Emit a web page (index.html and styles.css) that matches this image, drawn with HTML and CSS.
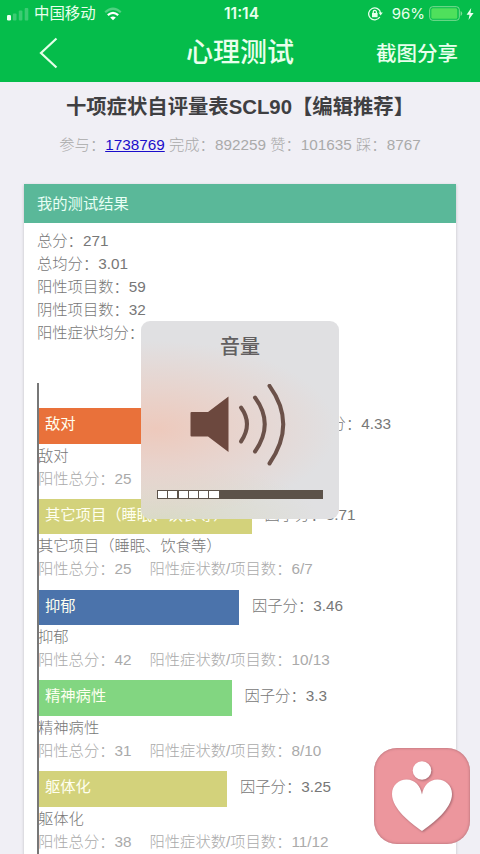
FILE: index.html
```html
<!DOCTYPE html>
<html lang="zh-CN">
<head>
<meta charset="utf-8">
<title>心理测试</title>
<link rel="stylesheet" href="styles.css">
</head>
<body>
<header class="top">
  <div class="status">
    <div class="status-left">
      <svg class="signal" width="22" height="14" viewBox="0 0 22 14"><rect x="0" y="8" width="4" height="5.500" rx="1.200" fill="#effff2"/><g fill="#fff" opacity=".22"><rect x="5.900" y="6.500" width="3.600" height="7" rx="1"/><rect x="11.800" y="3.500" width="3.600" height="10" rx="1"/><rect x="17.700" y="1" width="3.600" height="12.500" rx="1"/></g></svg>
      <span class="carrier">中国移动</span>
      <svg class="wifi" width="18" height="14" viewBox="0 0 18 14" fill="none" stroke="#fff" stroke-width="2.200"><path d="M1.200 5.300Q9-1.800 16.800 5.300" opacity=".3"/><path d="M3.800 8.100Q9 3.500 14.200 8.100"/><path d="M6.200 10.600Q9 8.200 11.800 10.600L9 13.300Z" fill="#fff" stroke="none"/></svg>
    </div>
    <div class="clock">11:14</div>
    <div class="status-right">
      <svg class="lock" width="15" height="14" viewBox="0 0 15 14" fill="none" stroke="#e8ffec" stroke-width="1.300"><path d="M11.800 10A6 6 0 1 1 12.600 6"/><path d="M10.500 5.600h4.300l-2.200 2.800z" fill="#e8ffec" stroke="none"/><rect x="4" y="6" width="5.600" height="4.200" fill="#e8ffec" stroke="none"/><path d="M5.200 6.300V5a1.600 1.600 0 0 1 3.200 0v1.300"/></svg>
      <span class="percent">96%</span>
      <svg class="battery" width="34" height="15" viewBox="0 0 34 15"><rect x=".7" y=".7" width="29.600" height="13.600" rx="3" fill="none" stroke="#7fdc94"/><rect x="2.300" y="2.300" width="26" height="10.400" rx="1.500" fill="#4fe05c"/><path d="M31.600 5v5q1.600-.8 1.600-2.500T31.600 5" fill="#7fdc94"/></svg>
      <svg class="bolt" width="8" height="12" viewBox="0 0 8 12"><path d="M5.200 0L.6 6.700H3.500L2.500 12 7.600 4.900H4.500Z" fill="#effff2"/></svg>
    </div>
  </div>
  <nav class="nav">
    <svg class="back" width="20" height="32" viewBox="0 0 20 32"><path d="M17.500 1.500L2 16 17.500 30.500" fill="none" stroke="#e4ffe9" stroke-width="2.200"/></svg>
    <h1 class="nav-title">心理测试</h1>
    <span class="share">截图分享</span>
  </nav>
</header>

<main class="page">
  <h2 class="quiz-title">十项症状自评量表SCL90【编辑推荐】</h2>
  <p class="meta">参与：<a class="count" href="#">1738769</a> 完成：892259 赞：101635 踩：8767</p>

  <section class="card">
    <div class="card-head">我的测试结果</div>
    <div class="summary">
      <p>总分：271</p>
      <p>总均分：3.01</p>
      <p>阳性项目数：59</p>
      <p>阴性项目数：32</p>
      <p>阳性症状均分：</p>
    </div>
    <div class="chart">
      <div class="factor">
        <div class="bar-row"><div class="bar orange" style="width:248px">敌对</div><span class="score">因子分：4.33</span></div>
        <p class="name">敌对</p>
        <p class="detail">阳性总分：25</p>
      </div>
      <div class="factor">
        <div class="bar-row"><div class="bar olive" style="width:212.500px">其它项目（睡眠、饮食等）</div><span class="score">因子分：3.71</span></div>
        <p class="name">其它项目（睡眠、饮食等）</p>
        <p class="detail"><span>阳性总分：25</span><span>阳性症状数/项目数：6/7</span></p>
      </div>
      <div class="factor">
        <div class="bar-row"><div class="bar blue" style="width:200px">抑郁</div><span class="score">因子分：3.46</span></div>
        <p class="name">抑郁</p>
        <p class="detail"><span>阳性总分：42</span><span>阳性症状数/项目数：10/13</span></p>
      </div>
      <div class="factor">
        <div class="bar-row"><div class="bar green" style="width:192.500px">精神病性</div><span class="score">因子分：3.3</span></div>
        <p class="name">精神病性</p>
        <p class="detail"><span>阳性总分：31</span><span>阳性症状数/项目数：8/10</span></p>
      </div>
      <div class="factor">
        <div class="bar-row"><div class="bar olive" style="width:188px">躯体化</div><span class="score">因子分：3.25</span></div>
        <p class="name">躯体化</p>
        <p class="detail"><span>阳性总分：38</span><span>阳性症状数/项目数：11/12</span></p>
      </div>
    </div>
  </section>
</main>

<div class="volume">
  <div class="volume-title">音量</div>
  <svg class="speaker" width="96" height="82" viewBox="0 0 96 82"><path d="M1.500 28H18L38.500 12.500V68L18 52.500H1.500Q.5 52.500 .5 51.500V29Q.5 28 1.500 28Z" fill="#6c483e"/><g fill="none" stroke="#6b5149" stroke-width="4" stroke-linecap="round"><path d="M51 23.500Q63 40 51 57.500"/><path d="M65 13.500Q84.500 40 65 67.500"/><path d="M79.500 1.800Q107 40 79.500 79.500"/></g></svg>
  <div class="level"><i></i><i></i><i></i><i></i><i></i><i></i></div>
</div>

<div class="app-badge">
  <svg width="96" height="96" viewBox="0 0 96 96"><g class="heart" fill="#fff"><circle cx="48" cy="22.500" r="9.300"/><path d="M48 83C37 75 18 61 18 46C18 37 25 31.500 32.500 31.500C41 31.500 46.500 38 48 46.500C49.500 38 55 31.500 63.500 31.500C71 31.500 78 37 78 46C78 61 59 75 48 83Z"/></g></svg>
</div>
</body>
</html>
```
FILE: styles.css
```css
* { box-sizing: border-box; }
body {
  margin: 0;
  width: 480px;
  height: 854px;
  overflow: hidden;
  position: relative;
  background: #f0eff5;
  color: #777;
  font: 300 15.300px/23px "Liberation Sans", "Noto Sans CJK SC", sans-serif;
}
h1, h2, p { margin: 0; }

.top { height: 82px; background: #05bd4b; color: #e9ffed; }
.status {
  display: grid;
  grid-template-columns: 1fr auto 1fr;
  align-items: center;
  height: 27px;
  padding: 0 6px 0 7px;
}
.status-left, .status-right { display: flex; align-items: center; }
.status-right { justify-content: flex-end; }
.carrier { margin-left: 5px; font-size: 15.400px; font-weight: 400; }
.wifi { margin-left: 8px; }
.clock { margin-left: 2px; font: 600 15.500px/27px Inter, sans-serif; }
.percent { margin-left: 9px; font: 400 15px/27px Inter, sans-serif; }
.battery { margin-left: 4px; }
.bolt { margin-left: 3px; }

.nav {
  display: grid;
  grid-template-columns: 82px 1fr auto;
  align-items: center;
  height: 52px;
  padding: 0 22px 0 39px;
}
.nav-title { padding-left: 65px; font-size: 27px; line-height: 50px; font-weight: 500; }
.share { font-size: 20.500px; font-weight: 500; }

.quiz-title {
  padding-top: 10px;
  text-align: center;
  color: #3f3f42;
  font-size: 20.350px;
  line-height: 30px;
  white-space: nowrap;
}
.meta { margin-top: 11px; text-align: center; color: #aaa; white-space: nowrap; }
.count { color: #1a0dcb; }

.card {
  margin: 28px 24px 0;
  height: 700px;
  background: #fff;
  box-shadow: 0 1px 3px rgba(0, 0, 0, .2);
}
.card-head {
  height: 39px;
  padding-left: 13px;
  background: #5ab899;
  color: #e8fff5;
  line-height: 40px;
  font-weight: 400;
}
.summary { padding: 6px 13px 0; }
.chart {
  margin: 39px 0 0 13px;
  padding-top: 25px;
  border-left: 2px solid #777;
}
.factor { height: 90.800px; white-space: nowrap; }
.bar-row { display: flex; height: 35.700px; line-height: 31px; }
.bar { flex: none; padding-left: 6px; color: #fffff0; font-weight: 400; }
.score { margin-left: 13px; }
.orange { background: #e9713a; }
.olive { background: #d3d27b; }
.blue { background: #4b73ab; }
.green { background: #82d681; }
.name, .detail { margin-left: -1px; }
.detail { display: flex; gap: 18px; color: #aaa; }

.volume {
  position: absolute;
  left: 141px;
  top: 321px;
  width: 198px;
  height: 198px;
  display: flex;
  flex-direction: column;
  align-items: center;
  border-radius: 9px;
  background:
    radial-gradient(ellipse 180px 88px at 15px 108px, rgba(238, 200, 186, .95), rgba(234, 208, 199, .7) 50%, rgba(224, 222, 223, 0)),
    radial-gradient(ellipse 160px 60px at 20px 200px, rgba(216, 216, 190, .8), rgba(222, 221, 215, 0)),
    #e0e0e2;
}
.volume-title { margin-top: 11px; font-size: 20px; line-height: 30px; font-weight: 500; color: #625f60; }
.speaker { margin: 22px 0 0 -4px; }
.level {
  display: flex;
  gap: 1.200px;
  width: 166px;
  height: 9px;
  margin-top: 24px;
  padding: 1px;
  background: #5c5249;
}
.level i { width: 9.100px; background: #fff; }

.app-badge {
  position: absolute;
  left: 374px;
  top: 748px;
  width: 96px;
  height: 96px;
  border-radius: 23px;
  background: #ec969d;
  box-shadow: inset 0 0 3px #a66870;
}
.heart { filter: drop-shadow(1px 1px 1px #a66870); }
```
